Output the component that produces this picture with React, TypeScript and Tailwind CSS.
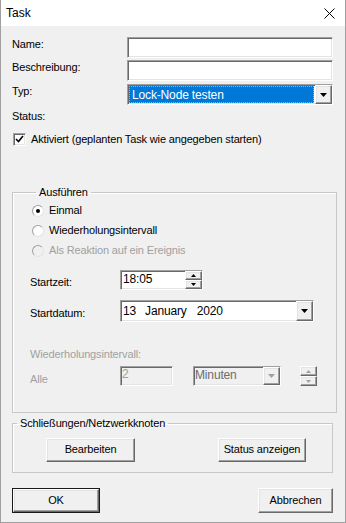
import React from 'react';

const font = { fontFamily: '"Liberation Sans", Arial, sans-serif' };

const sunken =
  'border border-t-[#a0a0a0] border-l-[#a0a0a0] border-b-white border-r-white shadow-[inset_1px_1px_0_#696969,inset_-1px_-1px_0_#e3e3e3]';
const raised =
  'border border-t-white border-l-white border-b-[#696969] border-r-[#696969] shadow-[inset_-1px_-1px_0_#a0a0a0,inset_1px_1px_0_#e3e3e3] bg-[#f0f0f0]';

function Arrow({ disabled = false }: { disabled?: boolean }) {
  return (
    <svg width="7" height="4" viewBox="0 0 7 4">
      <polygon points="0,0 7,0 3.5,4" fill={disabled ? '#a0a0a0' : '#000'} />
    </svg>
  );
}

function SmallArrow({ up, disabled = false }: { up?: boolean; disabled?: boolean }) {
  return (
    <svg width="5" height="3" viewBox="0 0 5 3">
      <polygon points={up ? '0,3 5,3 2.5,0' : '0,0 5,0 2.5,3'} fill={disabled ? '#a0a0a0' : '#000'} />
    </svg>
  );
}

function DropButton({ disabled = false }: { disabled?: boolean }) {
  return (
    <div className={`${raised} w-[17px] h-full flex items-center justify-center`}>
      <Arrow disabled={disabled} />
    </div>
  );
}

function Spinner({ disabled = false }: { disabled?: boolean }) {
  return (
    <div className="flex flex-col h-full w-[17px]">
      <div className={`${raised} flex-1 flex items-center justify-center`}>
        <SmallArrow up disabled={disabled} />
      </div>
      <div className={`${raised} flex-1 flex items-center justify-center`}>
        <SmallArrow disabled={disabled} />
      </div>
    </div>
  );
}

function Radio({ label, checked = false, disabled = false }: { label: string; checked?: boolean; disabled?: boolean }) {
  return (
    <div className="flex items-center h-[20px]">
      <div
        className={`w-[12px] h-[12px] rounded-full border border-t-[#a0a0a0] border-l-[#a0a0a0] border-b-[#e3e3e3] border-r-[#e3e3e3] flex items-center justify-center ${
          disabled ? 'bg-[#f0f0f0]' : 'bg-white'
        }`}
      >
        {checked && <div className="w-[4px] h-[4px] rounded-full bg-black" />}
      </div>
      <span className={`ml-[5px] ${disabled ? 'text-[#a0a0a0]' : 'text-black'}`}>{label}</span>
    </div>
  );
}

export default function App() {
  return (
    <div
      className="w-[346px] h-[523px] bg-[#f0f0f0] text-[11px] tracking-[-0.15px] text-black flex flex-col border-r border-b border-l border-[#a0a0a0] overflow-hidden"
      style={font}
    >
      {/* title bar */}
      <div className="h-[26px] bg-white flex items-center justify-between pl-[5px] pr-[10px] shrink-0">
        <span className="text-[12px] tracking-normal">Task</span>
        <svg width="11" height="11" viewBox="0 0 11 11">
          <path d="M0.5 0.5 L10.5 10.5 M10.5 0.5 L0.5 10.5" stroke="#000" strokeWidth="1" />
        </svg>
      </div>

      <div className="pl-[11px] pr-[12px] pt-[11px] flex flex-col">
        <div className="grid grid-cols-[115px_1fr] gap-y-[2px] items-start">
          <span className="leading-[13px] pt-[1px]">Name:</span>
          <div className={`${sunken} h-[21px] bg-white`} />
          <span className="leading-[13px] pt-[1px]">Beschreibung:</span>
          <div className={`${sunken} h-[21px] bg-white`} />
          <span className="leading-[13px] pt-[1px] mt-[1px]">Typ:</span>
          <div className={`${sunken} h-[21px] bg-white flex mt-[1px]`}>
            <div className="flex-1 m-[1px] bg-[#0078d7] text-white border border-dotted border-[#ff9a3c] flex items-center pl-[2px] text-[12px]">
              Lock-Node testen
            </div>
            <DropButton />
          </div>
        </div>

        <span className="mt-[5px] leading-[13px]">Status:</span>

        <div className="flex items-center mt-[8px] ml-[1px]">
          <div className={`w-[13px] h-[13px] ${sunken} bg-white flex items-center justify-center`}>
            <svg width="9" height="8" viewBox="0 0 9 8">
              <path d="M1 4 L3.5 6.5 L8 1" stroke="#000" strokeWidth="1.6" fill="none" />
            </svg>
          </div>
          <span className="ml-[5px]">Aktiviert (geplanten Task wie angegeben starten)</span>
        </div>

        {/* Ausführen group */}
        <fieldset className="mt-[38px] border border-[#c8c8c8] shadow-[inset_1px_1px_0_white] h-[227px] px-[19px] pb-0">
          <legend className="ml-[4px] px-[3px] leading-[13px]">Ausführen</legend>
          <div className="flex flex-col mt-[2px]">
            <Radio label="Einmal" checked />
            <Radio label="Wiederholungsintervall" />
            <Radio label="Als Reaktion auf ein Ereignis" disabled />

            <div className="flex items-center mt-[9px] -ml-[2px]">
              <span className="w-[90px] pt-[4px]">Startzeit:</span>
              <div className={`${sunken} h-[20px] w-[83px] bg-white flex`}>
                <span className="flex-1 pl-[2px] text-[12px] leading-[16px]">18:05</span>
                <Spinner />
              </div>
            </div>

            <div className="flex items-center mt-[10px] -ml-[2px]">
              <span className="w-[90px] pt-[4px]">Startdatum:</span>
              <div className={`${sunken} h-[22px] w-[194px] bg-white flex`}>
                <div className="flex-1 flex items-center pl-[2px] text-[12px]">
                  <span>13</span>
                  <span className="ml-[9px]">January</span>
                  <span className="ml-[10px]">2020</span>
                </div>
                <DropButton />
              </div>
            </div>

            <span className="mt-[26px] -ml-[2px] text-[#a0a0a0] leading-[13px]">Wiederholungsintervall:</span>

            <div className="flex items-center mt-[4px] -ml-[2px]">
              <span className="w-[90px] pt-[6px] text-[#a0a0a0]">Alle</span>
              <div className={`${sunken} h-[20px] w-[53px] flex text-[#a0a0a0] text-[12px] leading-[15px] pl-[1px]`}>2</div>
              <div className={`${sunken} ml-[20px] h-[20px] w-[88px] flex`}>
                <span className="flex-1 pl-[1px] text-[12px] text-[#6d6d6d] leading-[16px]">Minuten</span>
                <DropButton disabled />
              </div>
              <div className="ml-[19px] h-[20px]">
                <Spinner disabled />
              </div>
            </div>
          </div>
        </fieldset>

        {/* Schließungen group */}
        <fieldset className="mt-[4px] border border-[#c8c8c8] shadow-[inset_1px_1px_0_white] h-[56px] pb-0">
          <legend className="ml-[4px] px-[3px] leading-[13px]">Schließungen/Netzwerkknoten</legend>
          <div className="flex justify-between pl-[33px] pr-[26px] mt-[8px]">
            <button className={`${raised} w-[89px] h-[24px] whitespace-nowrap`}>Bearbeiten</button>
            <button className={`${raised} w-[88px] h-[24px] whitespace-nowrap`}>Status anzeigen</button>
          </div>
        </fieldset>

        <div className="flex justify-between mt-[15px]">
          <div className="border border-[#1a1a1a]">
            <button className={`${raised} w-[86px] h-[23px] block`}>OK</button>
          </div>
          <button className={`${raised} w-[75px] h-[25px] whitespace-nowrap`}>Abbrechen</button>
        </div>
      </div>
    </div>
  );
}
